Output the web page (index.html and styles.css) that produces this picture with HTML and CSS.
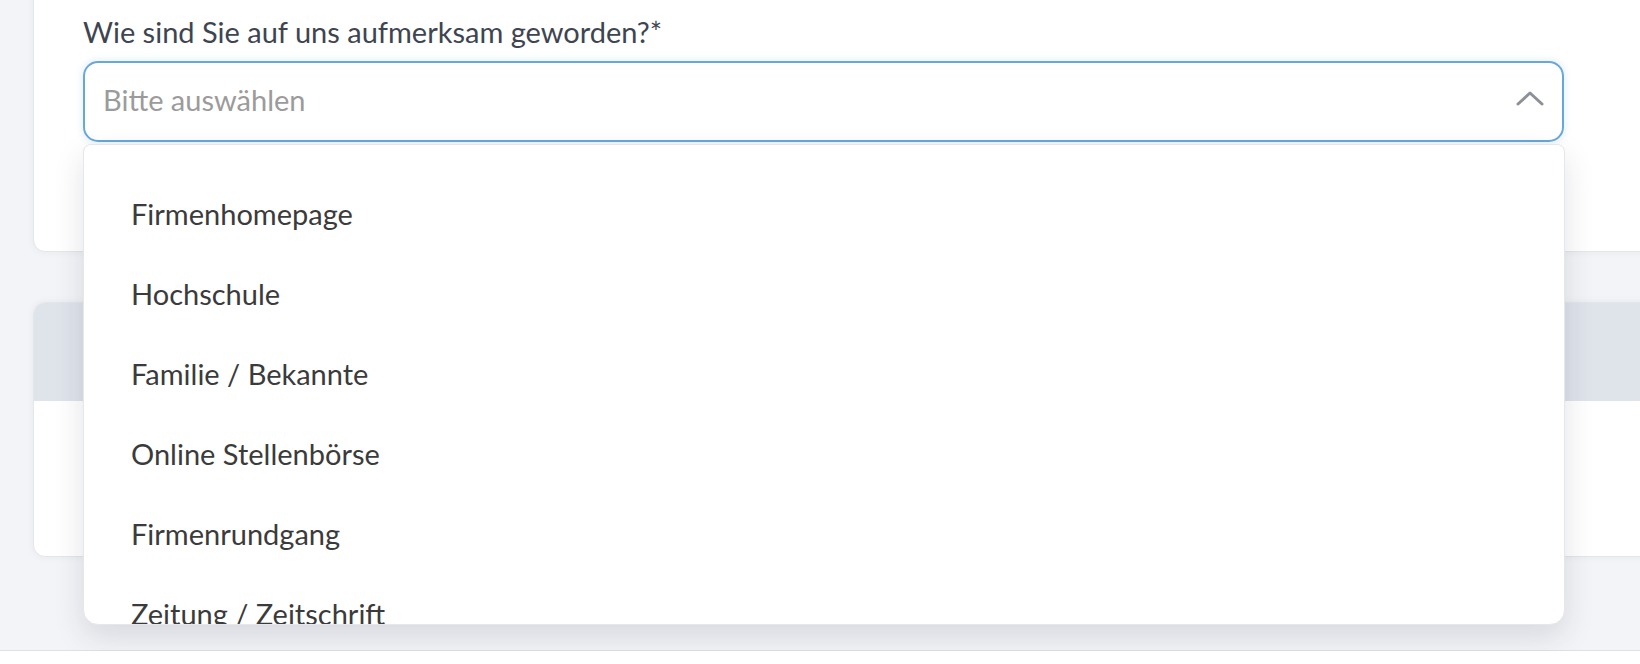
FILE: index.html
```html
<!DOCTYPE html>
<html lang="de">
<head>
  <meta charset="UTF-8" />
  <meta name="viewport" content="width=device-width, initial-scale=1.0"/>
  <title>Bewerbung</title>
  <link rel="stylesheet" href="styles.css">
</head>
<body>

  <div class="page">

    <!-- Herkunft -->
    <section class="card card--source">
      <div class="field">
        <label class="field__label" for="source">Wie sind Sie auf uns aufmerksam geworden?*</label>
        <div class="select is-open" id="source">
          <span class="select__placeholder">Bitte auswählen</span>
          <svg class="select__arrow" width="28" height="16" viewBox="0 0 28 16">
            <polyline points="2,14 14,3 26,14" fill="none" stroke="#8b9099" stroke-width="3" stroke-linecap="round" stroke-linejoin="round"/>
          </svg>

          <ul class="select__menu">
            <li>Firmenhomepage</li>
            <li>Hochschule</li>
            <li>Familie / Bekannte</li>
            <li>Online Stellenbörse</li>
            <li>Firmenrundgang</li>
            <li>Zeitung / Zeitschrift</li>
          </ul>
        </div>
      </div>
    </section>

    <!-- naechster Abschnitt -->
    <section class="card card--next">
      <div class="card__header"></div>
      <div class="card__body"></div>
    </section>

  </div>

</body>
</html>
```

FILE: styles.css
```css
* {
  margin: 0;
  padding: 0;
  box-sizing: border-box;
  font-family: 'Lato', sans-serif;
}

body {
  overflow: hidden;
  background: #ffffff;
}

.page {
  height: 651px;
  background: #f3f4f7;
  border-bottom: 1px solid #dde1e8;
  padding-left: 33px;
  display: flex;
  flex-direction: column;
  gap: 50px;
}

.card {
  background: #ffffff;
  border: 1px solid #e3e6ec;
  border-radius: 12px;
  margin-right: -60px;
  box-shadow: 0 0 8px rgba(30, 40, 60, 0.05);
}

.card--source {
  margin-top: -34px;
  height: 286px;
  padding: 45px 0 0 49px;
}

.field {
  width: 1481px;
  display: flex;
  flex-direction: column;
  gap: 9px;
}

.field__label {
  font-size: 29px;
  line-height: 40px;
  color: #3e4551;
}

.select {
  position: relative;
  height: 81px;
  border: 2px solid #68a7db;
  border-radius: 15px;
  box-shadow: 0 0 6px 2px rgba(104, 167, 219, 0.15);
  display: flex;
  align-items: center;
  justify-content: space-between;
  padding: 0 18px 4px 18px;
}

.select__placeholder {
  font-size: 29px;
  color: #9b9b9b;
}

.select__arrow {
  margin-bottom: 4px;
}

.select__menu {
  list-style: none;
  position: absolute;
  top: 81px;
  left: -2px;
  right: -3px;
  height: 481px;
  overflow: hidden;
  background: #ffffff;
  border: 1px solid #e4e7ec;
  border-radius: 8px 8px 15px 15px;
  box-shadow: 0 12px 30px rgba(30, 40, 60, 0.13);
  padding: 28px 0 0 47px;
  z-index: 10;
}

.select__menu li {
  height: 80px;
  display: flex;
  align-items: center;
  font-size: 29px;
  color: #3b3b3b;
}

.card--next {
  height: 255px;
  display: flex;
  flex-direction: column;
  overflow: hidden;
}

.card__header {
  height: 98px;
  background: #dfe3ea;
}

.card__body {
  flex: 1;
}
```
